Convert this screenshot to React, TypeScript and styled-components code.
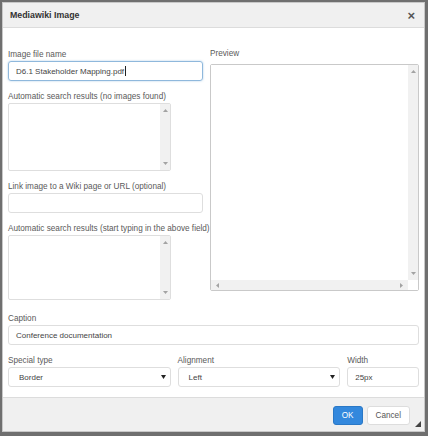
import React from "react";
import styled, { createGlobalStyle } from "styled-components";

const Global = createGlobalStyle`
  html, body { margin: 0; padding: 0; }
  body {
    background: #6f6f6f;
    font-family: "Liberation Sans", Arial, sans-serif;
    width: 428px;
    height: 436px;
    overflow: hidden;
  }
`;

const Dialog = styled.div`
  margin: 2px 0 0 2px;
  width: 421px;
  height: 428px;
  background: #fff;
  border: 1px solid #c8c8c8;
  display: flex;
  flex-direction: column;
  position: relative;
  font-family: "Liberation Sans", Arial, sans-serif;
`;

const Header = styled.div`
  height: 24px;
  flex: none;
  background: #f0f0f0;
  border-bottom: 1px solid #dcdcdc;
  display: flex;
  align-items: center;
  justify-content: space-between;
  padding: 0 9px 0 7px;
`;

const Title = styled.div`
  font-size: 8.8px;
  font-weight: bold;
  color: #333;
`;

const Close = styled.div`
  font-size: 13px;
  font-weight: bold;
  color: #555;
  line-height: 1;
`;

const Body = styled.div`
  flex: 1;
  padding: 21px 5px 0 5px;
  display: flex;
  flex-direction: column;
`;

const Columns = styled.div`
  display: grid;
  grid-template-columns: 195px 209px;
  column-gap: 7px;
`;

const Col = styled.div`
  display: flex;
  flex-direction: column;
`;

const Label = styled.div<{ $top?: number }>`
  font-size: 8.2px;
  color: #5a5a5a;
  line-height: 10px;
  margin-top: ${(p) => p.$top ?? 0}px;
  margin-bottom: 1px;
  white-space: nowrap;
`;

const Input = styled.div<{ $focus?: boolean }>`
  height: 18px;
  box-sizing: content-box;
  border: 1px solid ${(p) => (p.$focus ? "#8fb8dc" : "#dedede")};
  box-shadow: ${(p) => (p.$focus ? "0 0 2px rgba(80,150,210,0.5)" : "none")};
  border-radius: 3px;
  display: flex;
  align-items: center;
  padding: 0 7px;
  font-size: 8px;
  color: #444;
`;

const Caret = styled.span`
  display: inline-block;
  width: 1px;
  height: 10px;
  background: #222;
  margin-left: 1px;
`;

const ListBox = styled.div<{ $h: number }>`
  width: 161px;
  height: ${(p) => p.$h}px;
  border: 1px solid #dedede;
  border-radius: 2px;
  display: flex;
  justify-content: flex-end;
`;

const VScroll = styled.div`
  width: 10px;
  background: #f1f1f1;
  display: flex;
  flex-direction: column;
  justify-content: space-between;
  align-items: center;
  padding: 5px 0;
`;

const PreviewBox = styled.div`
  margin-top: 4px;
  height: 225px;
  border: 1px solid #c9c9c9;
  border-radius: 2px;
  display: grid;
  grid-template-columns: 1fr 10px;
  grid-template-rows: 1fr 10px;
`;

const PreviewArea = styled.div`
  background: #fff;
`;

const HScroll = styled.div`
  background: #f1f1f1;
  display: flex;
  justify-content: space-between;
  align-items: center;
  padding: 0 5px;
`;

const Corner = styled.div`
  background: #fff;
`;

const Row = styled.div`
  display: flex;
  gap: 7px;
`;

const Field = styled.div<{ $w: number }>`
  width: ${(p) => p.$w}px;
  display: flex;
  flex-direction: column;
`;

const Select = styled.div`
  height: 18px;
  border: 1px solid #dedede;
  border-radius: 3px;
  display: flex;
  align-items: center;
  justify-content: space-between;
  padding: 0 4px 0 10px;
  font-size: 8px;
  color: #444;
`;

const Footer = styled.div`
  height: 32px;
  flex: none;
  background: #f0f0f0;
  border-top: 1px solid #dcdcdc;
  display: flex;
  align-items: center;
  justify-content: flex-end;
  padding: 1px 14px 0 0;
  gap: 4px;
  position: relative;
`;

const Button = styled.div<{ $primary?: boolean }>`
  height: 17px;
  padding: 0 8px;
  border-radius: 3px;
  display: flex;
  align-items: center;
  font-size: 8.2px;
  background: ${(p) => (p.$primary ? "#3388dd" : "#fff")};
  color: ${(p) => (p.$primary ? "#fff" : "#555")};
  border: 1px solid ${(p) => (p.$primary ? "#2a78c6" : "#ddd")};
`;

const Grip = styled.svg`
  position: absolute;
  right: 3px;
  bottom: 4px;
`;

const Up = () => (
  <svg width="5" height="3" viewBox="0 0 5 3">
    <path d="M0 3 L2.5 0 L5 3 Z" fill="#a3a3a3" />
  </svg>
);
const Down = () => (
  <svg width="5" height="3" viewBox="0 0 5 3">
    <path d="M0 0 L2.5 3 L5 0 Z" fill="#a3a3a3" />
  </svg>
);
const Left = () => (
  <svg width="3" height="5" viewBox="0 0 3 5">
    <path d="M3 0 L0 2.5 L3 5 Z" fill="#a3a3a3" />
  </svg>
);
const Right = () => (
  <svg width="3" height="5" viewBox="0 0 3 5">
    <path d="M0 0 L3 2.5 L0 5 Z" fill="#a3a3a3" />
  </svg>
);
const Arrow = () => (
  <svg width="5" height="4" viewBox="0 0 5 4">
    <path d="M0 0 L2.5 4 L5 0 Z" fill="#222" />
  </svg>
);

const Scrolled = ({ h }: { h: number }) => (
  <ListBox $h={h}>
    <VScroll>
      <Up />
      <Down />
    </VScroll>
  </ListBox>
);

export default function App() {
  return (
    <>
      <Global />
      <Dialog>
        <Header>
          <Title>Mediawiki Image</Title>
          <Close>×</Close>
        </Header>
        <Body>
          <Columns>
            <Col>
              <Label $top={1}>Image file name</Label>
              <Input $focus>
                D6.1 Stakeholder Mapping.pdf<Caret />
              </Input>
              <Label $top={11}>Automatic search results (no images found)</Label>
              <Scrolled h={66} />
              <Label $top={11}>Link image to a Wiki page or URL (optional)</Label>
              <Input />
              <Label $top={11}>Automatic search results (start typing in the above field)</Label>
              <Scrolled h={63} />
            </Col>
            <Col>
              <Label>Preview</Label>
              <PreviewBox>
                <PreviewArea />
                <VScroll>
                  <Up />
                  <Down />
                </VScroll>
                <HScroll>
                  <Left />
                  <Right />
                </HScroll>
                <Corner />
              </PreviewBox>
            </Col>
          </Columns>
          <Label $top={14}>Caption</Label>
          <Input>Conference documentation</Input>
          <Row>
            <Field $w={163}>
              <Label $top={11}>Special type</Label>
              <Select>
                Border
                <Arrow />
              </Select>
            </Field>
            <Field $w={163}>
              <Label $top={11}>Alignment</Label>
              <Select>
                Left
                <Arrow />
              </Select>
            </Field>
            <Field $w={72}>
              <Label $top={11}>Width</Label>
              <Input>25px</Input>
            </Field>
          </Row>
        </Body>
        <Footer>
          <Button $primary>OK</Button>
          <Button>Cancel</Button>
          <Grip width="6" height="6" viewBox="0 0 6 6">
            <path d="M6 0 L6 6 L0 6 Z" fill="#444" />
          </Grip>
        </Footer>
      </Dialog>
    </>
  );
}
